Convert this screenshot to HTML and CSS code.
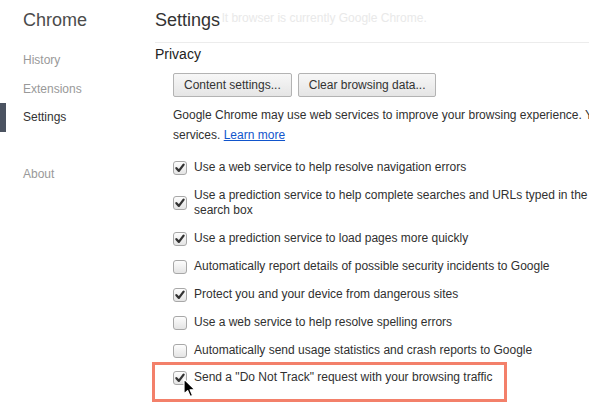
FILE: index.html
```html
<!DOCTYPE html>
<html>
<head>
<meta charset="utf-8">
<title>Settings</title>
<link rel="stylesheet" href="styles.css">
</head>
<body>
<div class="page">
  <aside class="sidebar">
    <h1 class="brand">Chrome</h1>
    <ul class="nav">
      <li class="nav-item">History</li>
      <li class="nav-item">Extensions</li>
      <li class="nav-item selected">Settings</li>
      <li class="nav-item about">About</li>
    </ul>
  </aside>
  <main class="main">
    <header class="header">
      <h2 class="title">Settings</h2><span class="ghost">lt browser is currently Google Chrome.</span>
    </header>
    <section class="section">
      <h3 class="section-title">Privacy</h3>
      <div class="section-body">
        <div class="buttons">
          <button class="btn">Content settings...</button>
          <button class="btn">Clear browsing data...</button>
        </div>
        <p class="desc">Google Chrome may use web services to improve your browsing experience. You may optionally disable these<br>services. <a class="link" href="#">Learn more</a></p>
        <div class="options">
          <div class="option"><span class="cb checked"><svg viewBox="0 0 14 14" width="14" height="14"><path d="M3.4 7.2 L5.9 9.9 L10.6 3.6" fill="none" stroke="#333" stroke-width="2.3" stroke-linecap="round" stroke-linejoin="round"/></svg></span><span class="label">Use a web service to help resolve navigation errors</span></div>
          <div class="option"><span class="cb checked"><svg viewBox="0 0 14 14" width="14" height="14"><path d="M3.4 7.2 L5.9 9.9 L10.6 3.6" fill="none" stroke="#333" stroke-width="2.3" stroke-linecap="round" stroke-linejoin="round"/></svg></span><span class="label">Use a prediction service to help complete searches and URLs typed in the address bar or app launcher<br>search box</span></div>
          <div class="option"><span class="cb checked"><svg viewBox="0 0 14 14" width="14" height="14"><path d="M3.4 7.2 L5.9 9.9 L10.6 3.6" fill="none" stroke="#333" stroke-width="2.3" stroke-linecap="round" stroke-linejoin="round"/></svg></span><span class="label">Use a prediction service to load pages more quickly</span></div>
          <div class="option"><span class="cb"></span><span class="label">Automatically report details of possible security incidents to Google</span></div>
          <div class="option"><span class="cb checked"><svg viewBox="0 0 14 14" width="14" height="14"><path d="M3.4 7.2 L5.9 9.9 L10.6 3.6" fill="none" stroke="#333" stroke-width="2.3" stroke-linecap="round" stroke-linejoin="round"/></svg></span><span class="label">Protect you and your device from dangerous sites</span></div>
          <div class="option"><span class="cb"></span><span class="label">Use a web service to help resolve spelling errors</span></div>
          <div class="option"><span class="cb"></span><span class="label">Automatically send usage statistics and crash reports to Google</span></div>
          <div class="highlight">
            <div class="option"><span class="cb checked"><svg viewBox="0 0 14 14" width="14" height="14"><path d="M3.4 7.2 L5.9 9.9 L10.6 3.6" fill="none" stroke="#333" stroke-width="2.3" stroke-linecap="round" stroke-linejoin="round"/></svg></span><span class="label">Send a "Do Not Track" request with your browsing traffic</span></div>
            <svg class="cursor" viewBox="0 0 13 20" width="13" height="20"><path d="M1 1 L1 16 L4.6 12.6 L7.2 18.6 L9.6 17.6 L7.1 11.8 L12 11.8 Z" fill="#000" stroke="#fff" stroke-width="1.2" stroke-linejoin="round"/></svg>
          </div>
        </div>
      </div>
    </section>
  </main>
</div>
</body>
</html>
```
FILE: styles.css
```css
html, body {
  margin: 0;
  padding: 0;
  overflow: hidden;
  background: #fff;
}
body {
  font-family: "Liberation Sans", Arial, Helvetica, sans-serif;
  font-size: 12px;
  color: #303030;
  width: 589px;
  height: 407px;
}
.page {
  display: flex;
  width: 900px;
}
.sidebar {
  width: 155px;
  flex: none;
}
.brand {
  margin: 0;
  padding: 8px 0 0 23px;
  font-size: 18px;
  line-height: 24px;
  font-weight: normal;
  color: #4b4b4b;
}
.nav {
  list-style: none;
  margin: 0;
  padding: 14px 0 0 0;
}
.nav-item {
  line-height: 28.5px;
  height: 28.5px;
  padding-left: 17px;
  border-left: 6px solid transparent;
  color: #999;
  font-size: 12px;
}
.nav-item.selected {
  border-left-color: #4b5361;
  color: #333;
}
.nav-item.about {
  margin-top: 28.5px;
}
.main {
  flex: 1;
}
.header {
  display: flex;
  align-items: baseline;
  padding: 8px 0 10px 0;
  border-bottom: 1px solid #ececec;
}
.title {
  margin: 0;
  font-size: 18px;
  line-height: 24px;
  font-weight: normal;
  color: #333;
}
.ghost {
  margin-left: 2px;
  font-size: 12px;
  color: #e9e9e9;
  white-space: nowrap;
  vertical-align: 4px;
  transform: translateY(-4px);
}
.section-title {
  margin: 2px 0 0 0;
  font-size: 14px;
  line-height: 18px;
  font-weight: normal;
  color: #222;
}
.section-body {
  padding-left: 18px;
}
.buttons {
  display: flex;
  gap: 6px;
  margin-top: 10px;
}
.btn {
  box-sizing: border-box;
  height: 24px;
  padding: 0 10px;
  font-family: "Liberation Sans", Arial, sans-serif;
  font-size: 12px;
  color: #333;
  background: linear-gradient(#f7f7f7, #e5e5e5);
  border: 1px solid #b3b3b3;
  border-radius: 2px;
}
.desc {
  margin: 8px 0 0 0;
  line-height: 20px;
  white-space: nowrap;
  color: #303030;
}
.link {
  color: #1155cc;
  text-decoration: underline;
}
.options {
  margin-top: 15px;
  display: flex;
  flex-direction: column;
  gap: 13px;
}
.option {
  display: flex;
  align-items: center;
  gap: 7px;
}
.label {
  line-height: 15px;
  white-space: nowrap;
  color: #303030;
}
.cb {
  box-sizing: border-box;
  width: 14px;
  height: 14px;
  flex: none;
  border: 1px solid #a8a8a8;
  border-radius: 3px;
  background: linear-gradient(#fdfdfd, #e4e4e4);
  display: flex;
}
.cb svg {
  margin: -1px;
}
.highlight {
  position: relative;
  box-sizing: border-box;
  width: 355px;
  margin: -9px 0 0 -21px;
  padding: 5px 0 14px 18px;
  border: 3px solid #f3806a;
}
.cursor {
  position: absolute;
  left: 28px;
  top: 13px;
}
```
